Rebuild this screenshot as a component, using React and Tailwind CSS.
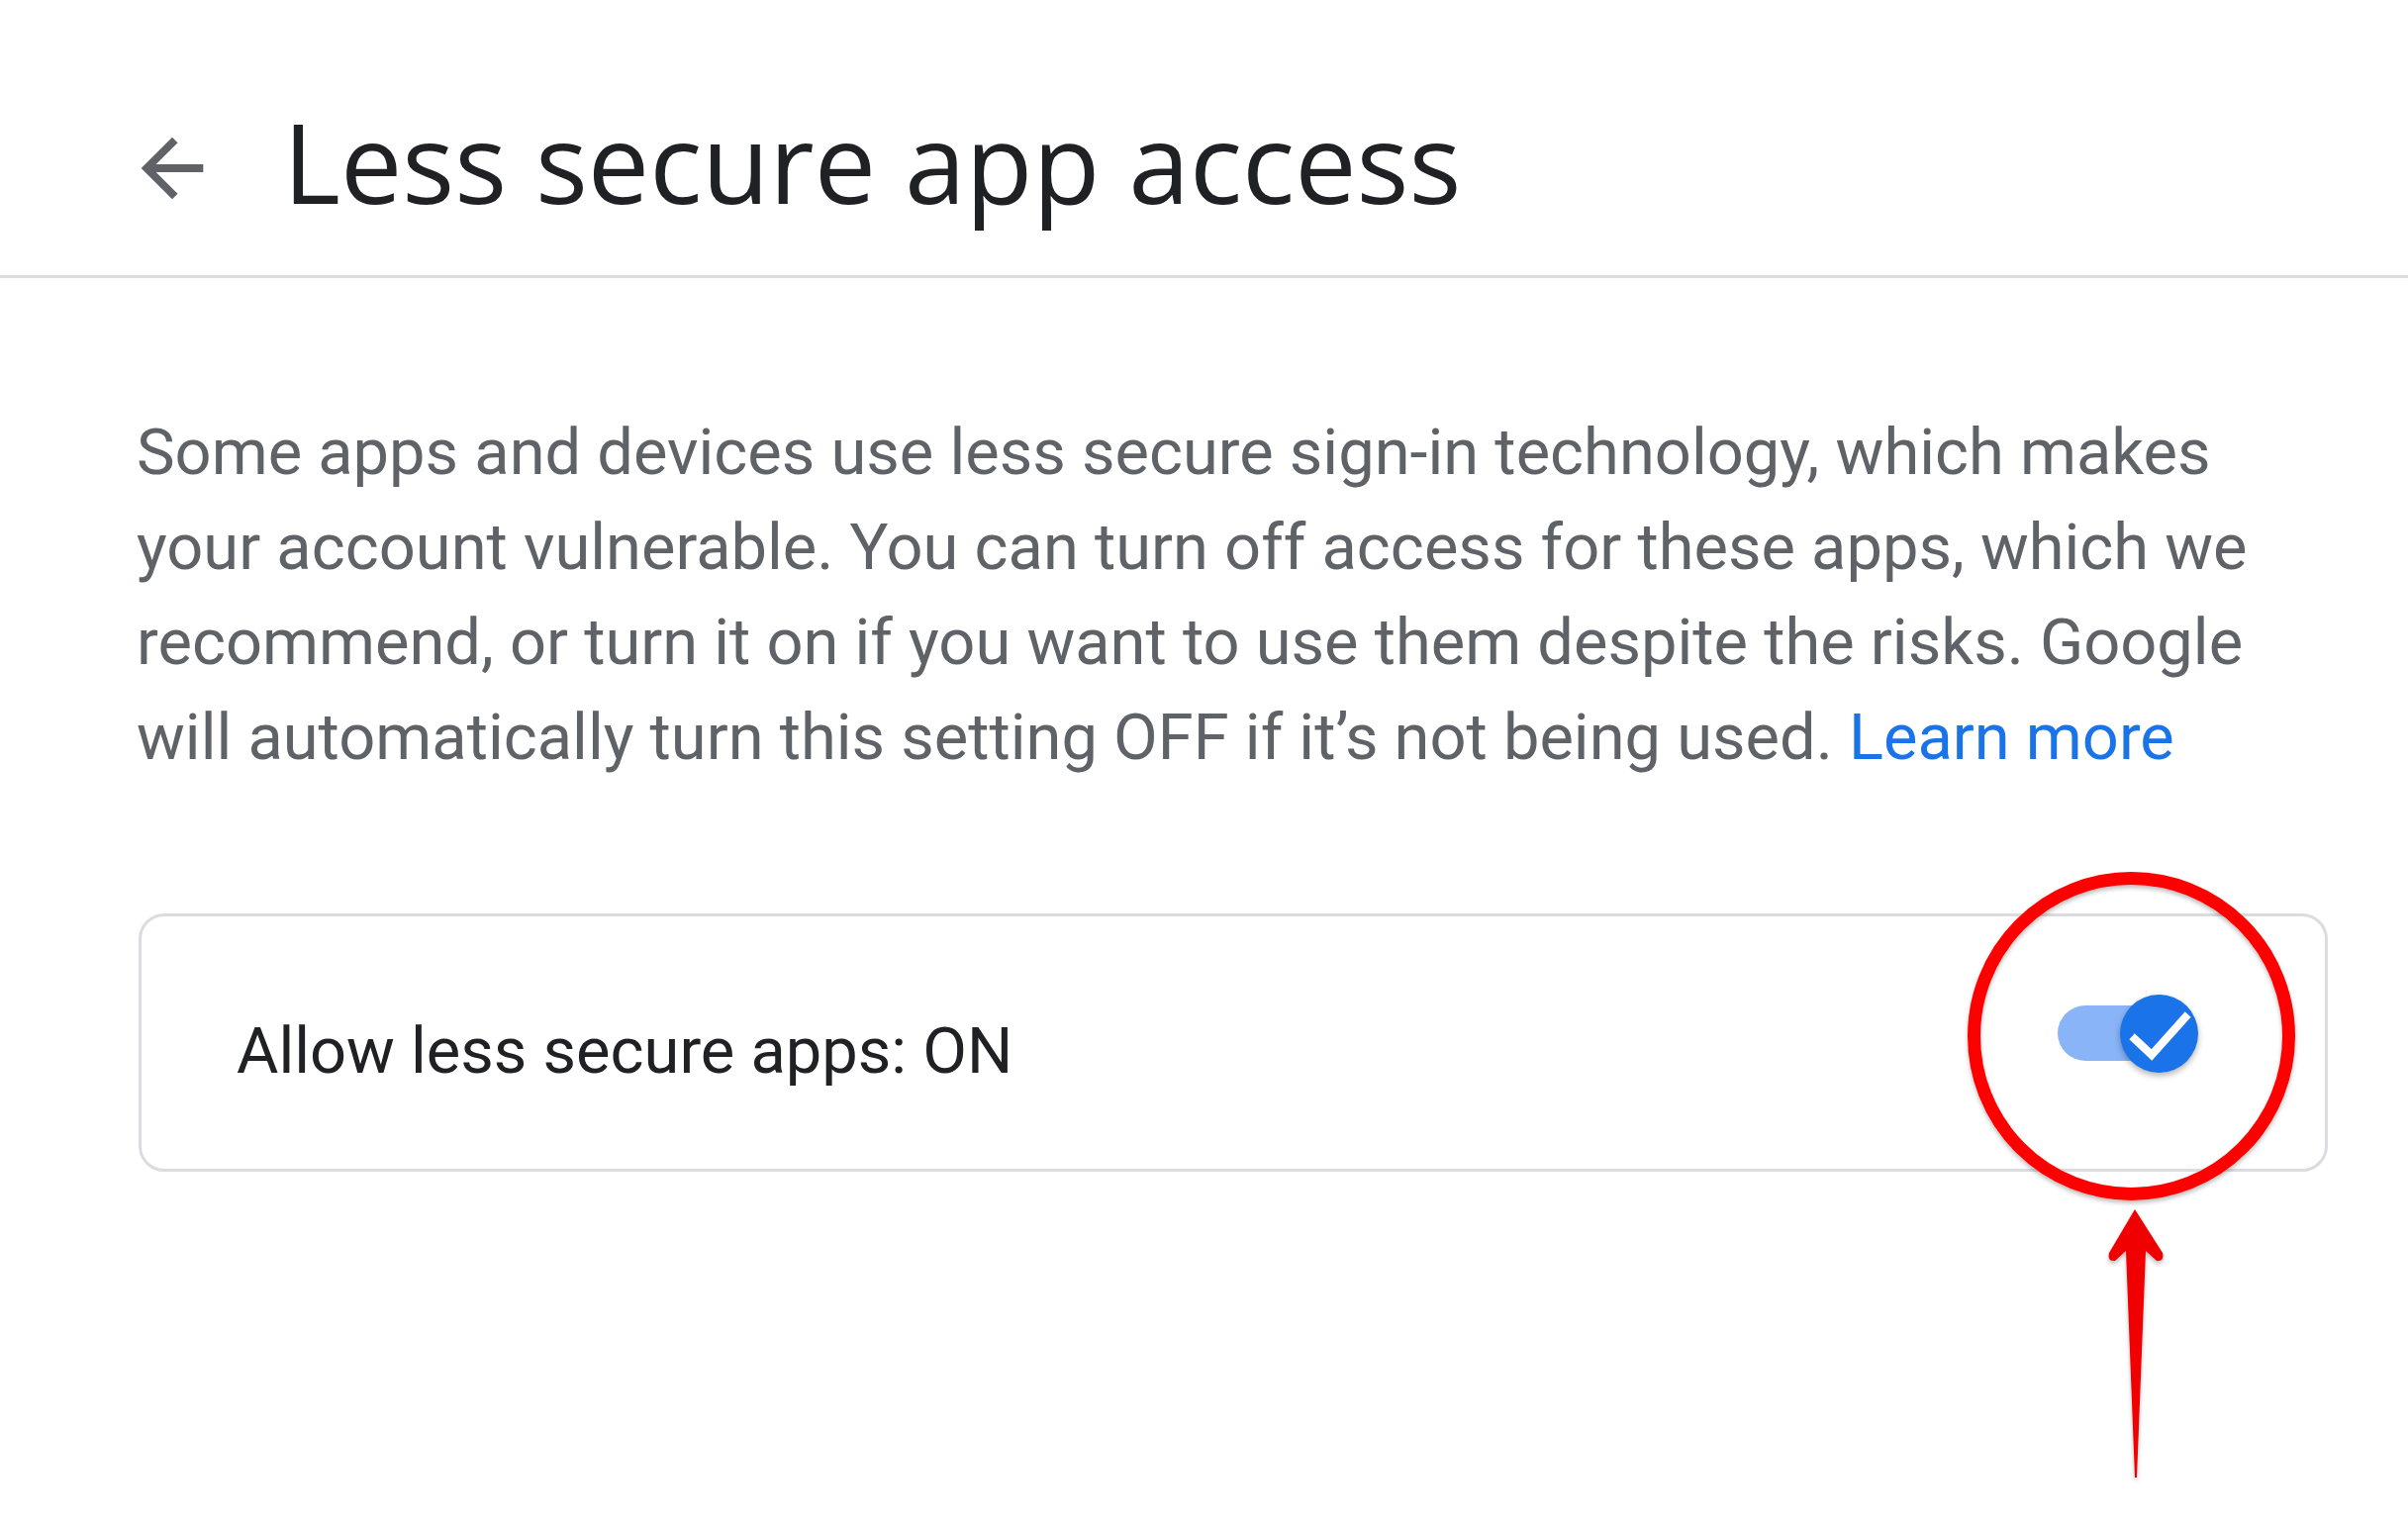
import React from "react";

function ArrowBack() {
  return (
    <svg width="94" height="94" viewBox="0 0 24 24" className="shrink-0">
      <path
        fill="#5f6368"
        d="M20 11H7.83l5.59-5.59L12 4l-8 8 8 8 1.41-1.41L7.83 13H20v-2z"
      />
    </svg>
  );
}

function Toggle() {
  return (
    <div className="relative w-[142px] h-[79px] shrink-0 mb-[19px]">
      <div className="absolute left-0 top-[11.5px] w-[126px] h-[56px] rounded-full bg-[#8ab4f8]" />
      <div className="absolute right-0 top-0 w-[79px] h-[79px] rounded-full bg-[#1a73e8] shadow-[0_3px_6px_rgba(0,0,0,0.3)] flex items-center justify-center">
        <svg width="79" height="79" viewBox="0 0 79 79">
          <path
            d="M15 45 L32 61 L66 23"
            fill="none"
            stroke="white"
            strokeWidth="8"
            strokeLinecap="square"
          />
        </svg>
      </div>
    </div>
  );
}

export default function App() {
  return (
    <div className="relative w-[2433px] min-h-[1542px] bg-white overflow-hidden">
      <header className="h-[281px] border-b-[3px] border-[#dadce0] pt-[108px]">
        <div className="flex items-start">
          <div className="ml-[127px] mt-[15px]">
            <ArrowBack />
          </div>
          <h1
            className="ml-[65px] text-[111px] leading-none text-[#202124] font-normal whitespace-nowrap"
            style={{ fontFamily: '"Open Sans", sans-serif' }}
          >
            Less secure app access
          </h1>
        </div>
      </header>

      <main className="pl-[138px] pr-[81px]">
        <p
          className="mt-[128px] text-[65px] leading-[96px] text-[#5f6368] whitespace-nowrap"
          style={{ fontFamily: 'Roboto, sans-serif' }}
        >
          Some apps and devices use less secure sign-in technology, which makes
          <br />
          your account vulnerable. You can turn off access for these apps, which we
          <br />
          recommend, or turn it on if you want to use them despite the risks. Google
          <br />
          will automatically turn this setting OFF if it’s not being used.{" "}
          <a className="text-[#1a73e8]" href="#">
            Learn more
          </a>
        </p>

        <div className="mt-[130px] ml-[2px] h-[261px] border-[3px] border-[#dadce0] rounded-[26px] flex items-center justify-between pl-[96px] pr-[128px]">
          <span
            className="mt-[17px] text-[65px] leading-none text-[#202124] whitespace-nowrap"
            style={{ fontFamily: 'Roboto, sans-serif' }}
          >
            Allow less secure apps: ON
          </span>
          <Toggle />
        </div>
      </main>

      <svg
        className="absolute left-0 top-0 pointer-events-none"
        width="2433"
        height="1542"
        viewBox="0 0 2433 1542"
      >
        <defs>
          <filter id="sh" x="-20%" y="-20%" width="140%" height="140%">
            <feDropShadow dx="0" dy="3" stdDeviation="2" floodColor="#000" floodOpacity="0.25" />
          </filter>
        </defs>
        <ellipse
          cx="2153.5"
          cy="1047"
          rx="159"
          ry="159.5"
          fill="none"
          stroke="#ff0000"
          strokeWidth="13"
          filter="url(#sh)"
        />
        <path
          d="M2157 1222 L2185 1266 Q2187 1275 2179 1274 L2168 1264 L2159 1493 L2157 1493 L2148 1264 L2137 1274 Q2129 1275 2131 1266 Z"
          fill="#f00000"
          filter="url(#sh)"
        />
      </svg>
    </div>
  );
}
